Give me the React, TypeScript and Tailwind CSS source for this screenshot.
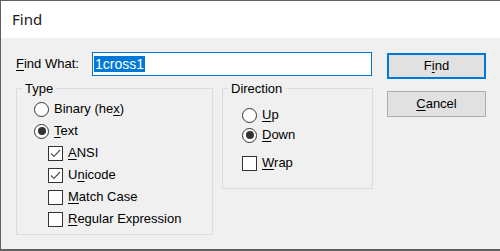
import type { ReactNode } from "react";

const font = { fontFamily: '"Liberation Sans", Arial, sans-serif' };

function Radio({ checked, children }: { checked?: boolean; children: ReactNode }) {
  return (
    <div className="flex h-[22px] items-center gap-[5px]">
      <span className="flex h-[15px] w-[15px] items-center justify-center rounded-full border border-[#333333] bg-white">
        {checked && <span className="h-[8px] w-[8px] rounded-full bg-[#333333]" />}
      </span>
      <span>{children}</span>
    </div>
  );
}

function Check({ checked, children }: { checked?: boolean; children: ReactNode }) {
  return (
    <div className="flex h-[22px] items-center gap-[5px]">
      <span className="flex h-[15px] w-[15px] items-center justify-center border border-[#333333] bg-white">
        {checked && (
          <svg width="11" height="9" viewBox="0 0 11 9" fill="none">
            <path d="M1 4.5 L4 7.5 L10 1" stroke="#555" strokeWidth="1.2" />
          </svg>
        )}
      </span>
      <span>{children}</span>
    </div>
  );
}

const U = ({ children }: { children: ReactNode }) => <span className="underline underline-offset-2">{children}</span>;

export default function App() {
  return (
    <div className="h-[251px] w-[500px] overflow-hidden border-l border-t border-b-2 border-[#5f5f5f] bg-[#f0f0f0] text-[13px] text-black" style={font}>
      {/* Title bar */}
      <div className="flex h-[37px] items-center bg-white pl-[11px] text-[15px] text-[#1a1a1a]" style={{ fontFamily: '"Noto Sans", "Open Sans", sans-serif' }}>
        Find
      </div>

      <div className="flex pl-[15px] pt-[14px]">
        {/* Left column */}
        <div className="w-[357px]">
          <div className="flex h-[24px] items-center">
            <span className="w-[76px]">
              <U>F</U>ind What:
            </span>
            <div className="flex h-[24px] w-[280px] items-center border border-[#0078d7] bg-white pl-[1px]">
              <span className="bg-[#0078d7] px-[1px] text-[14px] leading-[16px] text-white">1cross1</span>
            </div>
          </div>

          <div className="mt-[5px] flex items-start gap-[9px]">
            <fieldset className="h-[154px] w-[197px] border border-[#dcdcdc]">
              <legend className="ml-[5px] px-[3px] leading-[15px]">Type</legend>
              <div className="pl-[17px] pt-[2px]">
                <Radio>Binary (he<U>x</U>)</Radio>
                <Radio checked>
                  <U>T</U>ext
                </Radio>
                <div className="pl-[14px]">
                  <Check checked>
                    <U>A</U>NSI
                  </Check>
                  <Check checked>
                    U<U>n</U>icode
                  </Check>
                  <Check>
                    <U>M</U>atch Case
                  </Check>
                  <Check>
                    <U>R</U>egular Expression
                  </Check>
                </div>
              </div>
            </fieldset>

            <fieldset className="h-[108px] w-[151px] border border-[#dcdcdc]">
              <legend className="ml-[5px] px-[3px] leading-[15px]">Direction</legend>
              <div className="pl-[19px] pt-[8px]">
                <div className="-mb-[2px]">
                  <Radio>
                    <U>U</U>p
                  </Radio>
                </div>
                <Radio checked>
                  <U>D</U>own
                </Radio>
                <div className="mt-[6px]">
                  <Check>
                    <U>W</U>rap
                  </Check>
                </div>
              </div>
            </fieldset>
          </div>
        </div>

        {/* Buttons */}
        <div className="ml-[14px] flex flex-col gap-[12px] pt-[1px]">
          <button className="flex h-[26px] w-[99px] items-center justify-center border-2 border-[#0078d7] bg-[#e1e1e1]">
            F<U>i</U>nd
          </button>
          <button className="flex h-[26px] w-[99px] items-center justify-center border border-[#adadad] bg-[#e1e1e1]">
            <U>C</U>ancel
          </button>
        </div>
      </div>
    </div>
  );
}
